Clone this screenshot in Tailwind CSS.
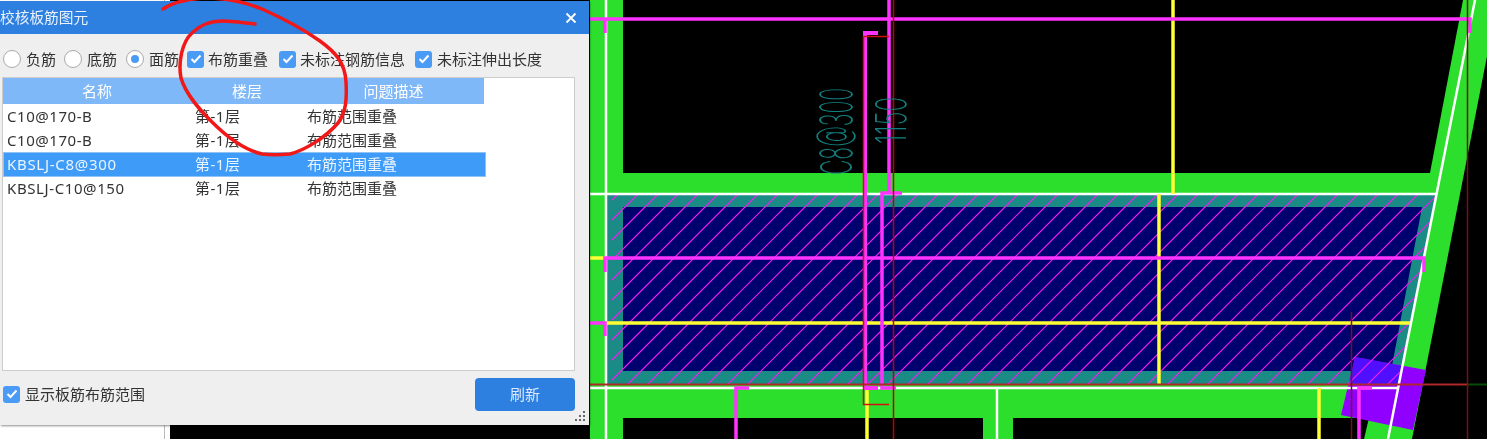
<!DOCTYPE html>
<html lang="zh">

<head>
    <meta charset="UTF-8">
    <title>校核板筋图元</title>
    <script src="https://cdn.jsdelivr.net/npm/@tailwindcss/browser@4"></script>
</head>

<body class="bg-black">
    <div class="relative w-[1487px] h-[439px] overflow-hidden bg-black blur-[0.4px] font-['Noto_Sans','Noto_Sans_CJK_SC',sans-serif] text-[15px] text-[#333]">

        <!-- white side panel behind the dialog -->
        <div class="absolute left-0 top-0 w-[170px] h-full bg-white border-r-[5px] border-white">
            <div class="w-[165px] h-full border-r border-[#bbb]"></div>
        </div>

        <!-- CAD drawing -->
        <svg class="absolute left-0 top-0" width="1487" height="439" viewBox="0 0 1487 439">
            <defs>
                <clipPath id="slab">
                    <polygon points="606,195 1436,195 1399,384 606,384" />
                </clipPath>
            </defs>

            <rect x="170" y="0" width="1317" height="439" fill="#000" />
            <polygon points="590,0 1498,0 1412,439 590,439" fill="#2ddf2d" />
            <polygon points="623,0 1463,0 1430,173 623,173" fill="#000" />
            <polygon points="623,418 983,418 983,439 623,439" fill="#000" />
            <polygon points="1013,418 1369,418 1364,439 1013,439" fill="#000" />

            <!-- slab -->
            <polygon points="606,195 1436,195 1399,384 606,384" fill="#1b8b85" />
            <polygon points="623,207 1422,207 1391,371 623,371" fill="#00006e" />
            <polygon points="1355,357 1426,370 1413,430 1341,415" fill="#9000ff" />
            <polygon points="1355,357 1402,366 1398,384 1349,384" fill="#5010ff" />
            <g clip-path="url(#slab)">
                <path stroke="#f01cf0" stroke-width="1.2" fill="none" d="M612 200L812 0M612 220L832 0M612 240L852 0M612 260L872 0M612 280L892 0M612 300L912 0M612 320L932 0M612 340L952 0M612 360L972 0M612 380L992 0M612 400L1012 0M632 400L1032 0M652 400L1052 0M672 400L1072 0M692 400L1092 0M712 400L1112 0M732 400L1132 0M752 400L1152 0M772 400L1172 0M792 400L1192 0M812 400L1212 0M832 400L1232 0M852 400L1252 0M872 400L1272 0M892 400L1292 0M912 400L1312 0M932 400L1332 0M952 400L1352 0M972 400L1372 0M992 400L1392 0M1012 400L1412 0M1032 400L1432 0M1052 400L1452 0M1072 400L1472 0M1092 400L1492 0M1112 400L1512 0M1132 400L1532 0M1152 400L1552 0M1172 400L1572 0M1192 400L1592 0M1212 400L1612 0M1232 400L1632 0M1252 400L1652 0M1272 400L1672 0M1292 400L1692 0M1312 400L1712 0M1332 400L1732 0M1352 400L1752 0M1372 400L1772 0M1392 400L1792 0" />
            </g>

            <!-- white outlines -->
            <g stroke="#fff" stroke-width="2.5" fill="none">
                <path d="M590 194H1436" />
                <path d="M590 388H1397" />
                <path d="M606 0V439" />
                <path d="M997 388V439" />
                <path d="M1475 0L1388 439" />
            </g>

            <!-- yellow bars -->
            <g stroke="#ffff33" stroke-width="3.5" fill="none">
                <path d="M1173 0V194" />
                <path d="M1159 194V384" />
                <path d="M590 258H606" />
                <path d="M606 323H1410" />
                <path d="M867 388V439" />
                <path d="M1319 388V439" />
            </g>

            <!-- magenta bars -->
            <g stroke="#ff33ff" stroke-width="3.5" fill="none">
                <path d="M590 19H1470V33" />
                <path d="M605 19V33" />
                <path d="M605 272V258H1424V272" />
                <path d="M590 323H605V336" />
                <path d="M889 0V193" />
                <path d="M878 33H865V388H878" stroke-width="4" />
                <path d="M902 193H882V388H896" />
                <path d="M749 388H736V439" />
                <path d="M1372 388H1359V439" />
            </g>

            <!-- dark red axis lines -->
            <g fill="none">
                <path d="M590 384.5H1467" stroke="#b02828" stroke-width="2" />
                <path d="M1467 384.5H1487" stroke="#0a4a0a" stroke-width="2" />
                <path d="M893.5 0V439" stroke="#c00000" stroke-width="1.5" />
                <path d="M1467.5 0V439" stroke="#7a1010" stroke-width="1.5" />
                <path d="M1351.5 312V439" stroke="#7a1010" stroke-width="1.5" />
                <path d="M889 36.5H863.5V404.5H889" stroke="#d01010" stroke-width="1.5" />
            </g>

            <!-- rebar labels -->
            <text transform="translate(852 175) rotate(-90) scale(0.5 1)" textLength="174" lengthAdjust="spacingAndGlyphs" font-size="44" font-weight="200" font-family="Inter" fill="#128080">C8@300</text>
            <text transform="translate(906 144) rotate(-90) scale(0.5 1)" textLength="94" lengthAdjust="spacingAndGlyphs" font-size="42" font-weight="200" font-family="Inter" fill="#128080">1150</text>
        </svg>

        <!-- dialog -->
        <div class="absolute left-0 top-[1px] w-[589px] h-[424px] flex flex-col bg-[#efefef] shadow-[1px_1px_2px_rgba(0,0,0,0.45)]">
            <div class="h-[33px] flex items-center justify-between bg-[#2d7fe0] text-[#e8f1fc] text-[14.7px]">
                <span>校核板筋图元</span>
                <svg class="mr-[12px]" width="12" height="12" viewBox="0 0 12 12">
                    <path d="M1.5 1.5L10.5 10.5M10.5 1.5L1.5 10.5" stroke="#fff" stroke-width="1.8" />
                </svg>
            </div>

            <!-- filter options -->
            <div class="h-[43px] flex items-center pl-[3px] pt-[7px]">
                <span class="w-[18px] h-[18px] rounded-full border border-[#aaa] bg-white"></span>
                <span class="ml-[5px]">负筋</span>
                <span class="ml-[8px] w-[18px] h-[18px] rounded-full border border-[#aaa] bg-white"></span>
                <span class="ml-[5px]">底筋</span>
                <span class="ml-[9px] w-[18px] h-[18px] rounded-full border border-[#aaa] bg-white flex items-center justify-center">
                    <span class="w-[8px] h-[8px] rounded-full bg-[#4a9bf5]"></span>
                </span>
                <span class="ml-[5px]">面筋</span>

                <span class="ml-[8px] w-[17px] h-[17px] rounded-[3px] bg-[#4a9bf5] flex items-center justify-center">
                    <svg width="12" height="10" viewBox="0 0 12 10"><path d="M1.5 5L4.5 8L10.5 1.5" stroke="#fff" stroke-width="2" fill="none" /></svg>
                </span>
                <span class="ml-[4px]">布筋重叠</span>
                <span class="ml-[11px] w-[17px] h-[17px] rounded-[3px] bg-[#4a9bf5] flex items-center justify-center">
                    <svg width="12" height="10" viewBox="0 0 12 10"><path d="M1.5 5L4.5 8L10.5 1.5" stroke="#fff" stroke-width="2" fill="none" /></svg>
                </span>
                <span class="ml-[4px]">未标注钢筋信息</span>
                <span class="ml-[10px] w-[17px] h-[17px] rounded-[3px] bg-[#4a9bf5] flex items-center justify-center">
                    <svg width="12" height="10" viewBox="0 0 12 10"><path d="M1.5 5L4.5 8L10.5 1.5" stroke="#fff" stroke-width="2" fill="none" /></svg>
                </span>
                <span class="ml-[5px]">未标注伸出长度</span>
            </div>

            <!-- result table -->
            <div class="ml-[2px] w-[573px] h-[294px] border border-[#ccc] bg-white">
                <div class="w-[481px] h-[26px] grid grid-cols-[188px_112px_181px] items-center text-center bg-[#7fb8f8] text-white">
                    <span>名称</span>
                    <span>楼层</span>
                    <span>问题描述</span>
                </div>
                <div class="w-[483px] h-[24px] grid grid-cols-[188px_112px_183px] items-center pl-[4px]">
                    <span class="tracking-[0.55px]">C10@170-B</span>
                    <span class="tracking-[0.5px]">第-1层</span>
                    <span>布筋范围重叠</span>
                </div>
                <div class="w-[483px] h-[24px] grid grid-cols-[188px_112px_183px] items-center pl-[4px]">
                    <span class="tracking-[0.55px]">C10@170-B</span>
                    <span class="tracking-[0.5px]">第-1层</span>
                    <span>布筋范围重叠</span>
                </div>
                <div class="w-[483px] h-[25px] grid grid-cols-[188px_112px_183px] items-center pl-[3px] border border-[#8fc3f5] bg-[#3f9bf8] text-[#eaf4ff]">
                    <span class="tracking-[0.7px]">KBSLJ-C8@300</span>
                    <span class="tracking-[0.5px]">第-1层</span>
                    <span>布筋范围重叠</span>
                </div>
                <div class="w-[483px] h-[23px] grid grid-cols-[188px_112px_183px] items-center pl-[4px]">
                    <span class="tracking-[0.6px]">KBSLJ-C10@150</span>
                    <span class="tracking-[0.5px]">第-1层</span>
                    <span>布筋范围重叠</span>
                </div>
            </div>

            <!-- footer -->
            <div class="relative flex-1 flex items-center pl-[3px] pr-[14px] pb-[8px]">
                <span class="w-[17px] h-[17px] rounded-[3px] bg-[#4a9bf5] flex items-center justify-center">
                    <svg width="12" height="10" viewBox="0 0 12 10"><path d="M1.5 5L4.5 8L10.5 1.5" stroke="#fff" stroke-width="2" fill="none" /></svg>
                </span>
                <span class="ml-[5px]">显示板筋布筋范围</span>
                <button class="ml-auto w-[100px] h-[33px] rounded-[4px] bg-[#2d7fe0] text-[#dbe9fb]">刷新</button>
                <svg class="absolute right-[3px] bottom-[3px]" width="11" height="11" viewBox="0 0 11 11" fill="#666">
                    <rect x="8" y="0" width="2" height="2" />
                    <rect x="4" y="4" width="2" height="2" />
                    <rect x="8" y="4" width="2" height="2" />
                    <rect x="0" y="8" width="2" height="2" />
                    <rect x="4" y="8" width="2" height="2" />
                    <rect x="8" y="8" width="2" height="2" />
                </svg>
            </div>
        </div>

        <!-- red hand-drawn annotation over everything -->
        <svg class="absolute left-0 top-0 pointer-events-none" width="1487" height="439" viewBox="0 0 1487 439">
            <path d="M163 9C172 3 185 -1 205 -2C225 -2 245 2 262 9C280 17 300 27 320 41C335 52 345 62 346 82C347 100 346 112 338 123C325 138 305 150 290 154C280 155 270 155 262 154C245 150 228 138 212 122C200 110 186 95 181 78C178 62 182 42 192 33C200 25 210 21 222 21C232 21 245 23 255 24" stroke="#f01818" stroke-width="3.5" fill="none" stroke-linecap="round" />
        </svg>
    </div>
</body>

</html>
